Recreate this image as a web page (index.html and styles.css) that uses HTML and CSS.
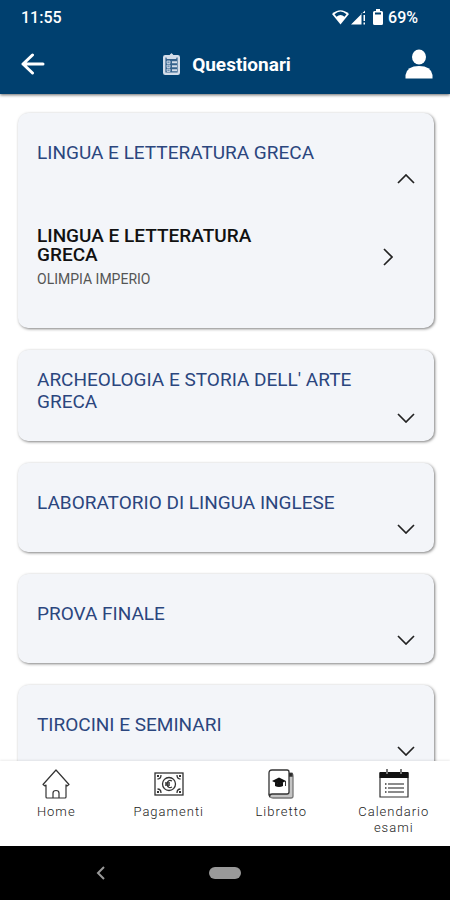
FILE: index.html
```html
<!DOCTYPE html>
<html lang="it">
<head>
<meta charset="utf-8">
<meta name="viewport" content="width=device-width, initial-scale=1">
<title>Questionari</title>
<link rel="stylesheet" href="styles.css">
</head>
<body>
<header class="top">
  <div class="status">
    <span>11:55</span>
    <div class="status-right">
      <svg width="34" height="16" viewBox="0 0 34 16" aria-hidden="true">
        <path d="M0 5Q8.500-2.500 17 5L8.500 15.500Z" fill="#fff"/>
        <path d="M2.500 5.200Q8.500 0 14.500 5.200L12.500 7.700Q8.500 4.500 4.500 7.700Z" fill="#00406f"/>
        <path d="M19 15.500L33 1.500V4H29.500V15.500ZM31.500 6H33V12H31.500ZM31.500 13.500H33V15.500H31.500Z" fill="#fff"/>
      </svg>
      <svg class="battery" width="10" height="16" viewBox="0 0 10 16" aria-hidden="true">
        <path d="M3 0H7V2H8.500Q10 2 10 3.500V14.500Q10 16 8.500 16H1.500Q0 16 0 14.500V3.500Q0 2 1.500 2H3Z" fill="#fff"/>
        <path d="M2 3.500H8V5.500H2Z" fill="#00406f"/>
      </svg>
      <span>69%</span>
    </div>
  </div>
  <div class="bar">
    <button class="icon-button" type="button" aria-label="Indietro">
      <svg width="24" height="22" viewBox="0 0 24 22" fill="none" stroke="#fff" stroke-width="3" stroke-linecap="round" stroke-linejoin="round"><path d="M11.500 2L2 11L11.500 20M2 11H22"/></svg>
    </button>
    <h1 class="page-title">
      <svg width="17" height="22" viewBox="0 0 17 22" fill="none" stroke="#d3dde9" aria-hidden="true">
        <rect x="1.200" y="3.200" width="14.600" height="17.600" rx="1" stroke-width="2.400" fill="#34628c"/>
        <path d="M4 5.500V3H6.500Q8.500-1.500 10.500 3H13V5.500Z" fill="#d3dde9"/>
        <path d="M4 8H7V10.500H4ZM4 12H7V14.500H4ZM4 16H7V18.500H4Z" fill="#6f92b5" stroke-width=".8"/>
        <path d="M9 9.300H14M9 13.300H14M9 17.300H14" stroke-width="2"/>
      </svg>
      Questionari
    </h1>
    <button class="icon-button" type="button" aria-label="Profilo">
      <svg width="28" height="30" viewBox="0 0 28 30" fill="#fff"><ellipse cx="14" cy="8" rx="7" ry="7.500"/><path d="M.5 29.500V26Q2 17 14 17T27.500 26V29.500Z"/></svg>
    </button>
  </div>
</header>

<main class="list">
  <section class="card">
    <button class="card-head" type="button" aria-expanded="true">
      <span class="card-title">LINGUA E LETTERATURA GRECA</span>
      <svg class="chevron" width="18" height="10" viewBox="0 0 18 10" stroke-width="1.700"><path d="M1 9L9 1L17 9"/></svg>
    </button>
    <a class="entry" href="#questionario">
      <span class="entry-text">
        <strong class="entry-name">LINGUA E LETTERATURA GRECA</strong>
        <span class="entry-teacher">OLIMPIA IMPERIO</span>
      </span>
      <svg class="chevron" width="10" height="18" viewBox="0 0 10 18" stroke-width="1.700"><path d="M1 1L9 9L1 17"/></svg>
    </a>
  </section>
  <section class="card">
    <button class="card-head" type="button" aria-expanded="false">
      <span class="card-title">ARCHEOLOGIA E STORIA DELL' ARTE GRECA</span>
      <svg class="chevron" width="18" height="10" viewBox="0 0 18 10" stroke-width="1.700"><path d="M1 1L9 9L17 1"/></svg>
    </button>
  </section>
  <section class="card">
    <button class="card-head" type="button" aria-expanded="false">
      <span class="card-title">LABORATORIO DI LINGUA INGLESE</span>
      <svg class="chevron" width="18" height="10" viewBox="0 0 18 10" stroke-width="1.700"><path d="M1 1L9 9L17 1"/></svg>
    </button>
  </section>
  <section class="card">
    <button class="card-head" type="button" aria-expanded="false">
      <span class="card-title">PROVA FINALE</span>
      <svg class="chevron" width="18" height="10" viewBox="0 0 18 10" stroke-width="1.700"><path d="M1 1L9 9L17 1"/></svg>
    </button>
  </section>
  <section class="card">
    <button class="card-head" type="button" aria-expanded="false">
      <span class="card-title">TIROCINI E SEMINARI</span>
      <svg class="chevron" width="18" height="10" viewBox="0 0 18 10" stroke-width="1.700"><path d="M1 1L9 9L17 1"/></svg>
    </button>
  </section>
</main>

<nav class="tabs">
  <a class="tab" href="#home">
    <svg width="30" height="30" viewBox="0 0 30 30" fill="none" stroke="#333" stroke-width="1.200" stroke-linejoin="round"><path d="M15 1L28 15.500L26 17L25 16V28Q25 29 24 29H6Q5 29 5 28V16L4 17L2 15.500ZM12 29V24Q12 21.500 15 21.500T18 24V29"/></svg>
    Home
  </a>
  <a class="tab" href="#pagamenti">
    <svg width="30" height="30" viewBox="0 0 30 30" fill="none" stroke="#333" stroke-width="1.300"><rect x="1" y="4" width="28" height="22"/><circle cx="15" cy="15" r="6.500"/><path d="M18 12Q14 10 13 15Q14 20 18 18M11 14H16M11 16H16M3.500 10Q7 10 7 6M26.500 10Q23 10 23 6M3.500 20Q7 20 7 24M26.500 20Q23 20 23 24"/><path d="M3 6H5V8H3ZM25 6H27V8H25ZM3 22H5V24H3ZM25 22H27V24H25Z" fill="#333" stroke="none"/></svg>
    Pagamenti
  </a>
  <a class="tab" href="#libretto">
    <svg width="30" height="30" viewBox="0 0 30 30" fill="none" stroke="#333" stroke-width="1.300"><path d="M23 4.500H26Q27 5 27 7V27Q27 29 25 29H7Q3.500 29 3 25Z" fill="#c4c4c4" stroke="#777"/><path d="M23 4.500H26V7H23Z" fill="#222"/><path d="M6 1H21Q23 1 23 3V23Q23 25 21 25H6Q4 25 3.500 27Q3 26 3 24V4Q3 1 6 1Z" fill="#fff"/><path d="M13 8.500L20 12L13 15.500L6 12Z" fill="#111" stroke="none"/><path d="M9 13V17Q13 19 17 17V13L13 15Z" fill="#111" stroke="none"/><path d="M19.500 12V17" stroke-width="1"/></svg>
    Libretto
  </a>
  <a class="tab" href="#calendario">
    <svg width="30" height="30" viewBox="0 0 30 30" fill="none" stroke="#333" stroke-width="1.200"><path d="M1 4V28H29V4" /><path d="M.5 3H29.500V9H.5Z" fill="#111" stroke="none"/><path d="M8 0V5M22 0V5" stroke="#777" stroke-width="2"/><path d="M9 15H25M9 19H25M9 23H25" stroke="#666" stroke-width="1.500"/><path d="M6 15H7.500M6 19H7.500M6 23H7.500" stroke-width="1.500"/></svg>
    Calendario esami
  </a>
</nav>
<footer class="system">
  <svg width="9" height="14" viewBox="0 0 9 14" fill="none" stroke="#999" stroke-width="2"><path d="M8 1L2 7L8 13"/></svg>
  <span class="pill"></span>
</footer>
</body>
</html>
```
FILE: styles.css
```css
* {
  box-sizing: border-box;
}

body {
  margin: 0;
  height: 100vh;
  display: flex;
  flex-direction: column;
  overflow: hidden;
  background: #fff;
  font-family: Roboto, "Liberation Sans", sans-serif;
}

svg {
  display: block;
  flex: none;
}

button {
  border: 0;
  padding: 0;
  background: none;
  font: inherit;
  text-align: left;
}

a {
  text-decoration: none;
}

.top {
  position: relative;
  flex: none;
  background: #00406f;
  color: #fff;
  box-shadow: 0 1px 3px rgba(0, 0, 0, 0.6);
}

.status {
  display: flex;
  justify-content: space-between;
  align-items: center;
  height: 34px;
  padding: 0 32px 0 21px;
  font-size: 16px;
  font-weight: 500;
}

.status-right {
  display: flex;
  align-items: center;
}

.battery {
  margin: 0 5px 0 7px;
}

.bar {
  display: grid;
  grid-template-columns: 1fr auto 1fr;
  align-items: center;
  height: 60px;
  padding: 0 17px 0 21px;
}

.icon-button:last-child {
  justify-self: end;
}

.icon-button {
  justify-self: start;
}

.page-title {
  display: flex;
  align-items: center;
  gap: 12px;
  margin: 0;
  font-size: 19px;
  font-weight: 700;
}

.list {
  flex: 1;
  min-height: 0;
  overflow: hidden;
  display: flex;
  flex-direction: column;
  gap: 22px;
  padding: 19px 16px 0 18px;
}

.card {
  flex: none;
  border-radius: 10px;
  background: #f3f5f9;
  box-shadow: 1px 1px 3px rgba(0, 0, 0, 0.5);
}

.card-head {
  display: flex;
  flex-direction: column;
  width: 100%;
  padding: 19px 19px 18px;
}

.card-title {
  display: flex;
  align-items: center;
  min-height: 42px;
  color: #2b467e;
  font-size: 19px;
  line-height: 22px;
}

.chevron {
  fill: none;
  stroke: #222;
}

.card-head .chevron {
  align-self: flex-end;
}

.entry {
  display: flex;
  justify-content: space-between;
  align-items: center;
  padding: 24px 41px 40px 19px;
}

.entry-text {
  display: flex;
  flex-direction: column;
  gap: 6px;
  width: 65%;
}

.entry-name {
  color: #111;
  font-size: 19px;
  font-weight: 500;
  line-height: 19px;
}

.entry-teacher {
  color: #555;
  font-size: 14px;
  line-height: 18px;
}

.tabs {
  position: relative;
  flex: none;
  display: grid;
  grid-template-columns: repeat(4, 1fr);
  padding: 8px 0 10px;
  background: #fff;
  box-shadow: 0 -1px 2px rgba(0, 0, 0, 0.08);
}

.tab {
  display: flex;
  flex-direction: column;
  align-items: center;
  gap: 5px;
  padding: 0 10px;
  color: #222;
  font-size: 13px;
  font-weight: 300;
  letter-spacing: 1px;
  line-height: 16px;
  text-align: center;
}

.system {
  flex: none;
  display: grid;
  grid-template-columns: 1fr auto 1fr;
  align-items: center;
  height: 54px;
  background: #000;
}

.system svg {
  justify-self: center;
  margin-right: 8px;
}

.pill {
  width: 32px;
  height: 12px;
  border-radius: 6px;
  background: #999;
}
```
